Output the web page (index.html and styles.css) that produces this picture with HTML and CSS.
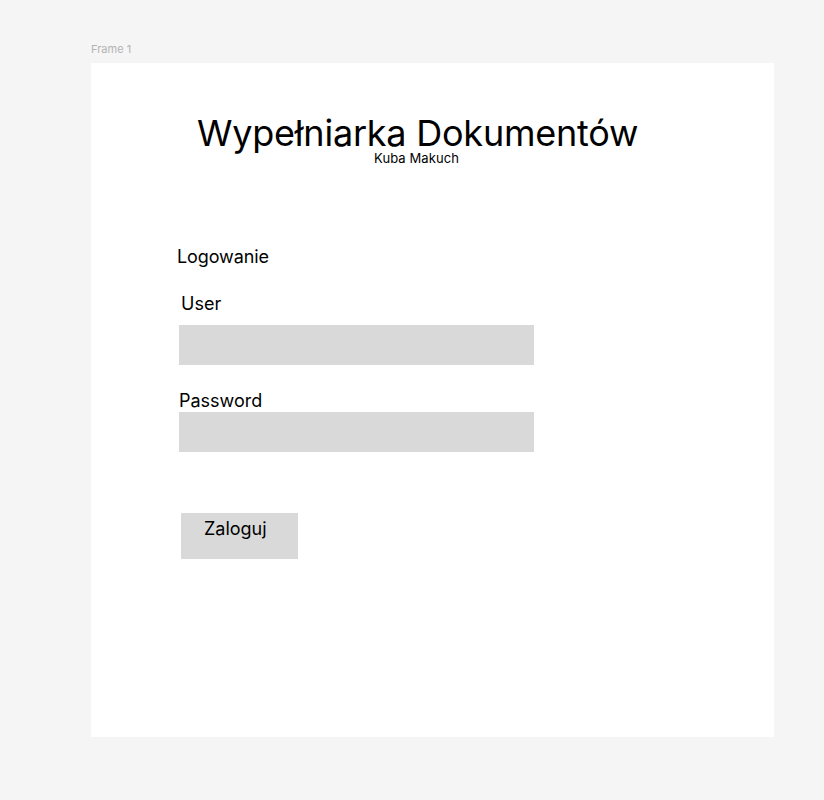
FILE: index.html
```html
<!DOCTYPE html>
<html lang="pl">
<head>
<meta charset="utf-8">
<title>Wypełniarka Dokumentów</title>
<link rel="stylesheet" href="styles.css">
</head>
<body>
<div class="canvas">
  <div class="frame-label">Frame 1</div>
  <div class="frame">
    <h1 class="title">Wypełniarka Dokumentów</h1>
    <div class="subtitle">Kuba Makuch</div>
    <div class="section">Logowanie</div>
    <div class="label label-user">User</div>
    <div class="input"></div>
    <div class="label label-pass">Password</div>
    <div class="input input-pass"></div>
    <div class="button"><span>Zaloguj</span></div>
  </div>
</div>
</body>
</html>
```
FILE: styles.css
```css
html, body {
  margin: 0;
  padding: 0;
  background: #f5f5f5;
  font-family: Inter, "Noto Sans", sans-serif;
  color: #000;
}
.canvas {
  width: 824px;
  height: 800px;
  padding-top: 42px;
  box-sizing: border-box;
}
.frame-label {
  margin-left: 91px;
  font-size: 11px;
  line-height: 14px;
  color: #b3b3b3;
  height: 21px;
}
.frame {
  margin-left: 91px;
  width: 683px;
  height: 674px;
  background: #fff;
  box-sizing: border-box;
  padding-top: 52px;
}
.title {
  margin: 0 0 0 106px;
  font-size: 36px;
  font-weight: 400;
  line-height: 36px;
  letter-spacing: -0.22px;
  white-space: nowrap;
}
.subtitle {
  margin: 1px 0 0 283px;
  font-size: 13px;
  line-height: 13px;
  letter-spacing: 0.1px;
}
.section {
  margin: 81px 0 0 86px;
  font-size: 18px;
  line-height: 22px;
  letter-spacing: -0.1px;
}
.label {
  font-size: 18px;
  line-height: 22px;
}
.label-user {
  margin: 25px 0 0 90px;
}
.input {
  margin: 10px 0 0 88px;
  width: 355px;
  height: 40px;
  background: #d9d9d9;
}
.label-pass {
  margin: 25px 0 0 88px;
}
.input-pass {
  margin-top: 0;
}
.button {
  margin: 61px 0 0 90px;
  width: 117px;
  height: 46px;
  background: #d9d9d9;
  box-sizing: border-box;
  padding: 5px 0 0 23px;
  font-size: 18px;
  line-height: 22px;
}
```
